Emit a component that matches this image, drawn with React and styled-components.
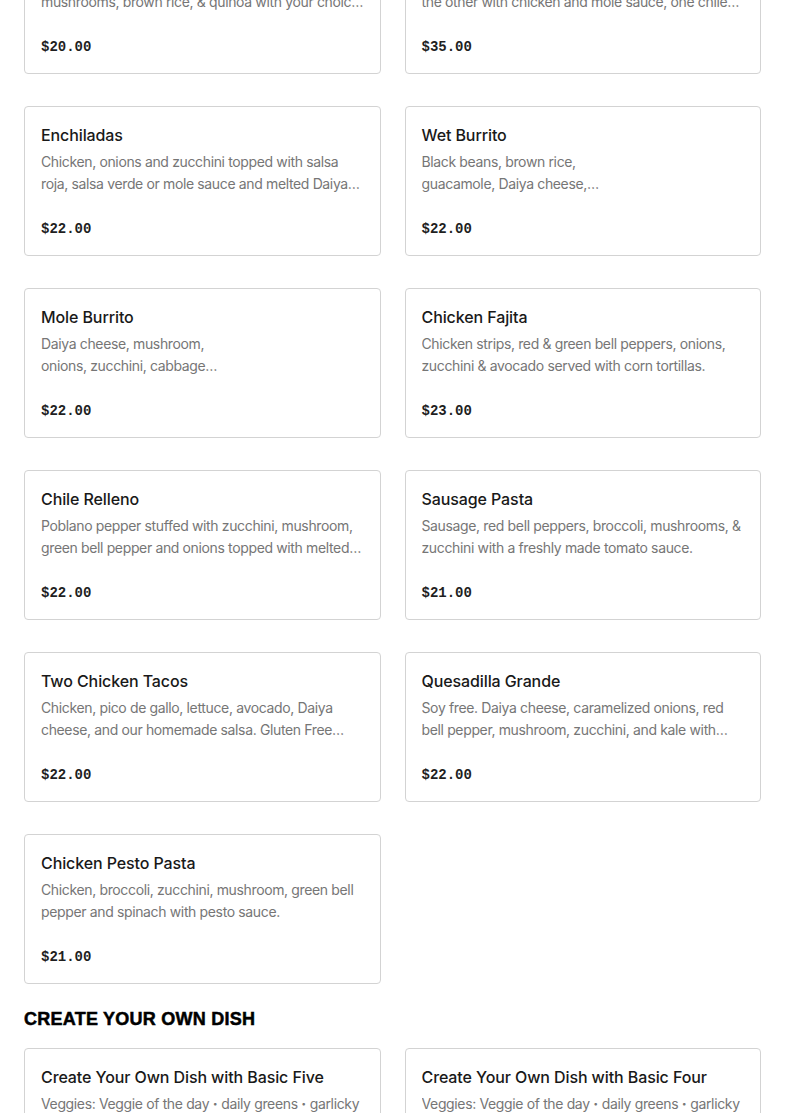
import React from "react";
import styled, { createGlobalStyle } from "styled-components";

const Global = createGlobalStyle`
  html, body { margin: 0; padding: 0; background: #ffffff; }
  body { font-family: Inter, "Noto Sans", sans-serif; overflow: hidden; }
`;

const Page = styled.main`
  padding: 0 24px;
  margin-top: -76px;
  height: 1189px;
  overflow: hidden;
`;

const Section = styled.section`
  display: flex;
  flex-direction: column;
`;

const SectionTitle = styled.h2`
  margin: 23px 0 17px;
  font-family: "Liberation Sans", Arial, sans-serif;
  font-weight: 900;
  font-size: 18px;
  line-height: 24px;
  letter-spacing: 0.25px;
  color: #000;
  -webkit-text-stroke: 0.5px #000;
  text-transform: uppercase;
`;

const Grid = styled.div`
  display: grid;
  grid-template-columns: repeat(2, minmax(0, 1fr));
  column-gap: 24px;
  row-gap: 32px;
`;

const Card = styled.article`
  box-sizing: border-box;
  height: 150px;
  border: 1px solid #d3d3d3;
  border-radius: 4px;
  padding: 16px 16px 16px;
  display: flex;
  flex-direction: column;
  background: #fff;
`;

const Name = styled.h3`
  margin: 0;
  font-size: 16px;
  line-height: 24px;
  font-weight: 500;
  color: #191919;
  letter-spacing: -0.1px;
`;

const Desc = styled.p`
  margin: 4px 0 0;
  font-size: 14px;
  line-height: 22px;
  color: #767676;
  white-space: pre-line;
  display: -webkit-box;
  -webkit-line-clamp: 2;
  -webkit-box-orient: vertical;
  overflow: hidden;
  letter-spacing: -0.36px;
`;

const Dot = styled.span`
  font-weight: 800;
  letter-spacing: 0;
`;

const Price = styled.div`
  margin-top: auto;
  font-family: "Liberation Mono", "DejaVu Sans Mono", monospace;
  font-weight: 700;
  font-size: 14px;
  line-height: 20px;
  color: #1f1f1f;
`;

const mains = [
  {
    name: "Veggie Bowl",
    desc: "Zucchini, red bell pepper, broccoli, onions,\nmushrooms, brown rice, & quinoa with your choice of protein and sauce",
    price: "$20.00",
  },
  {
    name: "Combination Plate",
    desc: "Two enchiladas, one with cheese and salsa roja,\nthe other with chicken and mole sauce, one chile relleno, rice and beans",
    price: "$35.00",
  },
  {
    name: "Enchiladas",
    desc: "Chicken, onions and zucchini topped with salsa roja, salsa verde or mole sauce and melted Daiya cheese.",
    price: "$22.00",
  },
  {
    name: "Wet Burrito",
    desc: "Black beans, brown rice,\nguacamole, Daiya cheese,\nsalsa and chicken.",
    price: "$22.00",
  },
  {
    name: "Mole Burrito",
    desc: "Daiya cheese, mushroom,\nonions, zucchini, cabbage\nand chicken with mole sauce.",
    price: "$22.00",
  },
  {
    name: "Chicken Fajita",
    desc: "Chicken strips, red & green bell peppers, onions, zucchini & avocado served with corn tortillas.",
    price: "$23.00",
  },
  {
    name: "Chile Relleno",
    desc: "Poblano pepper stuffed with zucchini, mushroom, green bell pepper and onions topped with melted Daiya cheese.",
    price: "$22.00",
  },
  {
    name: "Sausage Pasta",
    desc: "Sausage, red bell peppers, broccoli, mushrooms, & zucchini with a freshly made tomato sauce.",
    price: "$21.00",
  },
  {
    name: "Two Chicken Tacos",
    desc: "Chicken, pico de gallo, lettuce, avocado, Daiya cheese, and our homemade salsa. Gluten Free corn tortillas.",
    price: "$22.00",
  },
  {
    name: "Quesadilla Grande",
    desc: "Soy free. Daiya cheese, caramelized onions, red bell pepper, mushroom, zucchini, and kale with whole wheat tortilla.",
    price: "$22.00",
  },
  {
    name: "Chicken Pesto Pasta",
    desc: "Chicken, broccoli, zucchini, mushroom, green bell pepper and spinach with pesto sauce.",
    price: "$21.00",
  },
];

const createOwn = [
  {
    name: "Create Your Own Dish with Basic Five",
    desc: "Veggies: Veggie of the day • daily greens • garlicky mushrooms • roasted potatoes • brown rice",
    price: "$18.00",
  },
  {
    name: "Create Your Own Dish with Basic Four",
    desc: "Veggies: Veggie of the day • daily greens • garlicky mushrooms • roasted potatoes",
    price: "$16.00",
  },
];

function renderDesc(text) {
  const parts = text.split(" • ");
  return parts.map((p, i) => (
    <React.Fragment key={i}>
      {i > 0 && (
        <>
          {" "}
          <Dot>·</Dot>{" "}
        </>
      )}
      {p}
    </React.Fragment>
  ));
}

function MenuCard({ item }) {
  return (
    <Card>
      <Name>{item.name}</Name>
      <Desc>{renderDesc(item.desc)}</Desc>
      <Price>{item.price}</Price>
    </Card>
  );
}

export default function App() {
  return (
    <>
      <Global />
      <Page>
        <Section>
          <Grid>
            {mains.map((m) => (
              <MenuCard key={m.name} item={m} />
            ))}
          </Grid>
        </Section>
        <Section>
          <SectionTitle>Create Your Own Dish</SectionTitle>
          <Grid>
            {createOwn.map((m) => (
              <MenuCard key={m.name} item={m} />
            ))}
          </Grid>
        </Section>
      </Page>
    </>
  );
}
